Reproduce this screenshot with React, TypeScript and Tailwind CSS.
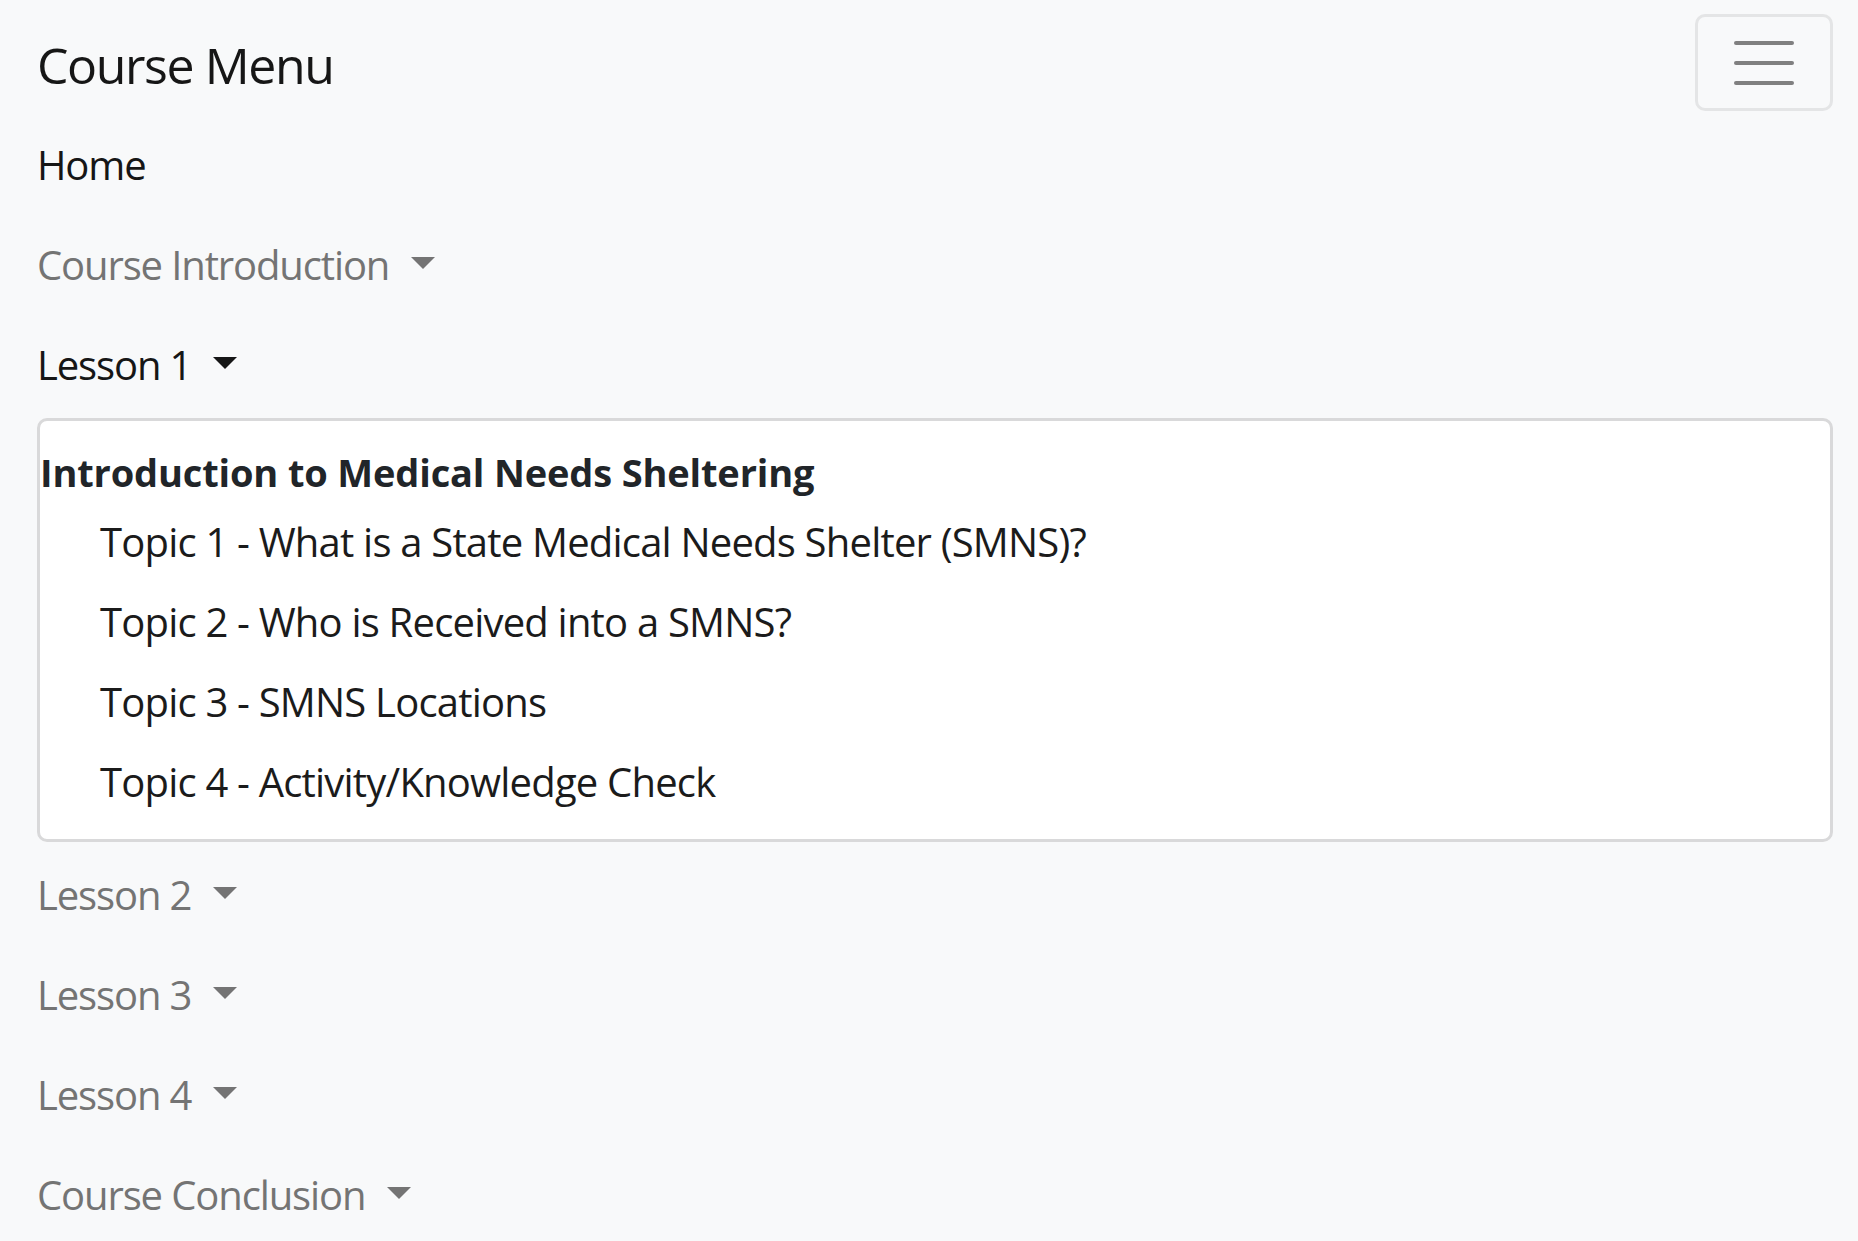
import React from "react";

const Caret = ({ dark }: { dark?: boolean }) => (
  <span
    className={
      "ml-[22px] mb-[5px] inline-block h-0 w-0 border-l-[12px] border-r-[12px] border-t-[12px] border-l-transparent border-r-transparent " +
      (dark ? "border-t-[#161616]" : "border-t-[#747474]")
    }
  />
);

const NavItem = ({
  label,
  muted,
  caret,
  dark,
}: {
  label: string;
  muted?: boolean;
  caret?: boolean;
  dark?: boolean;
}) => (
  <li
    className={
      "flex h-[100px] items-center text-[40px] leading-[60px] tracking-[-0.028em] " +
      (muted ? "text-[#747474]" : "text-[#161616]")
    }
  >
    <span>{label}</span>
    {caret && <Caret dark={dark} />}
  </li>
);

export default function App() {
  const topics = [
    "Topic 1 - What is a State Medical Needs Shelter (SMNS)?",
    "Topic 2 - Who is Received into a SMNS?",
    "Topic 3 - SMNS Locations",
    "Topic 4 - Activity/Knowledge Check",
  ];
  return (
    <div className="min-h-[1241px] overflow-hidden bg-[#f8f9fa] pl-[37px] pr-[25px] font-['Open_Sans',sans-serif]">
      <header className="flex h-[115px] items-start justify-between pt-[14px]">
        <div className="flex h-[97px] items-center pt-[6px] text-[50px] leading-[75px] tracking-[-0.028em] text-[#161616]">
          Course Menu
        </div>
        <button className="flex h-[97px] w-[138px] flex-col items-center justify-center gap-[16px] rounded-[10px] border-[3px] border-[#e4e5e6]">
          <span className="block h-[4px] w-[60px] rounded-full bg-[#808080]" />
          <span className="block h-[4px] w-[60px] rounded-full bg-[#808080]" />
          <span className="block h-[4px] w-[60px] rounded-full bg-[#808080]" />
        </button>
      </header>
      <ul>
        <NavItem label="Home" />
        <NavItem label="Course Introduction" muted caret />
        <NavItem label="Lesson 1" caret dark />
      </ul>
      <div className="mt-[3px] rounded-[10px] border-[3px] border-[#d9d9da] bg-white pb-[17px] pt-[24px]">
        <div className="mb-[3px] text-[38px] font-bold leading-[54px] tracking-[-0.004em] text-[#212529]">
          Introduction to Medical Needs Sheltering
        </div>
        <ul>
          {topics.map((t) => (
            <li
              key={t}
              className="flex h-[80px] items-center pl-[60px] text-[40px] leading-[60px] tracking-[-0.02em] text-[#1b1b1b]"
            >
              {t}
            </li>
          ))}
        </ul>
      </div>
      <ul className="mt-[3px]">
        <NavItem label="Lesson 2" muted caret />
        <NavItem label="Lesson 3" muted caret />
        <NavItem label="Lesson 4" muted caret />
        <NavItem label="Course Conclusion" muted caret />
      </ul>
    </div>
  );
}
